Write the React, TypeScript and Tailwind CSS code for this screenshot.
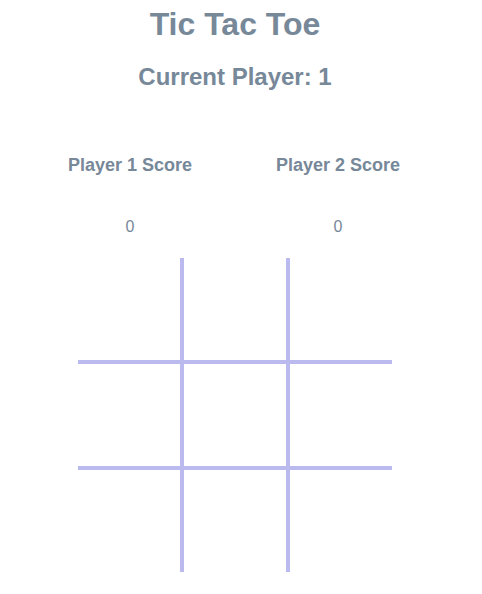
export default function App() {
  const cells = Array.from({ length: 9 })
  return (
    <div className="flex w-[470px] flex-col items-center font-['Liberation_Sans',Arial,sans-serif] text-[#778899]">
      <h1 className="text-[32px] font-bold leading-[48px]">Tic Tac Toe</h1>
      <h2 className="mt-[11px] text-[24px] font-bold leading-[36px]">Current Player: 1</h2>
      <div className="mt-[56px] flex pr-[2px]">
        <div className="flex w-[208px] flex-col items-center">
          <h3 className="text-[18px] font-bold leading-[28px]">Player 1 Score</h3>
          <p className="mt-[36px] text-base leading-6">0</p>
        </div>
        <div className="flex w-[208px] flex-col items-center">
          <h3 className="text-[18px] font-bold leading-[28px]">Player 2 Score</h3>
          <p className="mt-[36px] text-base leading-6">0</p>
        </div>
      </div>
      <div className="mt-[19px] grid w-[314px] grid-cols-3 gap-1 bg-[#babaee]">
        {cells.map((_, i) => (
          <div key={i} className="h-[102px] bg-white" />
        ))}
      </div>
    </div>
  )
}
